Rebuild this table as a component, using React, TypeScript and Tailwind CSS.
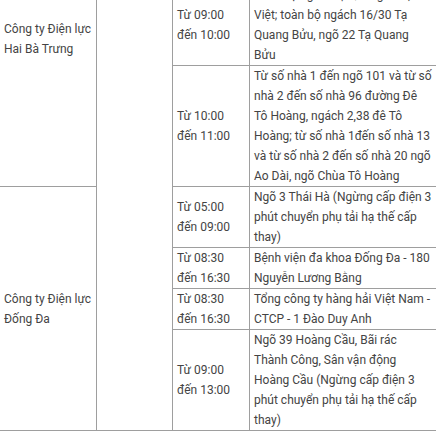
import React from "react";

type Row = {
  company?: { name: string; span: number };
  time: string[];
  area: React.ReactNode;
  h?: string;
};

const rows: Row[] = [
  {
    company: { name: "Công ty Điện lực Hai Bà Trưng", span: 3 },
    time: ["Từ 08:00", "đến 12:00"],
    area: "Ngõ 1 Tạ Quang Bửu, ngõ 2 Tạ Quang Bửu, khu tập thể Bách Khoa",
    h: "h-[94px]",
  },
  {
    time: ["Từ 09:00", "đến 10:00"],
    area: (
      <>
        Toàn bộ ngõ 1 Tạ Quang Bửu, Hồ
        <br />
        Việt; toàn bộ ngách 16/30 Tạ Quang Bửu, ngõ 22 Tạ Quang Bửu
      </>
    ),
  },
  {
    time: ["Từ 10:00", "đến 11:00"],
    area: "Từ số nhà 1 đến ngõ 101 và từ số nhà 2 đến số nhà 96 đường Đê Tô Hoàng, ngách 2,38 đê Tô Hoàng; từ số nhà 1đến số nhà 13 và từ số nhà 2 đến số nhà 20 ngõ Ao Dài, ngõ Chùa Tô Hoàng",
  },
  {
    company: { name: "Công ty Điện lực Đống Đa", span: 4 },
    time: ["Từ 05:00", "đến 09:00"],
    area: "Ngõ 3 Thái Hà (Ngừng cấp điện 3 phút chuyển phụ tải hạ thế cấp thay)",
  },
  {
    time: ["Từ 08:30", "đến 16:30"],
    area: "Bệnh viện đa khoa Đống Đa - 180 Nguyễn Lương Bằng",
  },
  {
    time: ["Từ 08:30", "đến 16:30"],
    area: "Tổng công ty hàng hải Việt Nam - CTCP - 1 Đào Duy Anh",
  },
  {
    time: ["Từ 09:00", "đến 13:00"],
    area: "Ngõ 39 Hoàng Cầu, Bãi rác Thành Công, Sân vận động Hoàng Cầu (Ngừng cấp điện 3 phút chuyển phụ tải hạ thế cấp thay)",
  },
];

const cell = "border border-[#9e9e9e] px-[4px] py-0 align-middle";

export default function App() {
  return (
    <div className="h-[432px] w-[436px] overflow-hidden bg-white">
      <table
        className="-ml-px mt-[-110px] w-[437px] table-fixed border-collapse text-[12px] leading-[20px] text-[#444]"
        style={{ fontFamily: "Roboto, 'Liberation Sans', sans-serif" }}
      >
        <colgroup>
          <col className="w-[97px]" />
          <col className="w-[76px]" />
          <col className="w-[77px]" />
          <col className="w-[187px]" />
        </colgroup>
        <tbody>
          {rows.map((r, i) => (
            <tr key={i}>
              {r.company && (
                <td rowSpan={r.company.span} className={cell}>
                  {r.company.name}
                </td>
              )}
              {i === 0 && <td rowSpan={rows.length} className={cell} />}
              <td className={`${cell} ${r.h ?? ""}`}>
                {r.time[0]}
                <br />
                {r.time[1]}
              </td>
              <td className={cell}>{r.area}</td>
            </tr>
          ))}
        </tbody>
      </table>
    </div>
  );
}
